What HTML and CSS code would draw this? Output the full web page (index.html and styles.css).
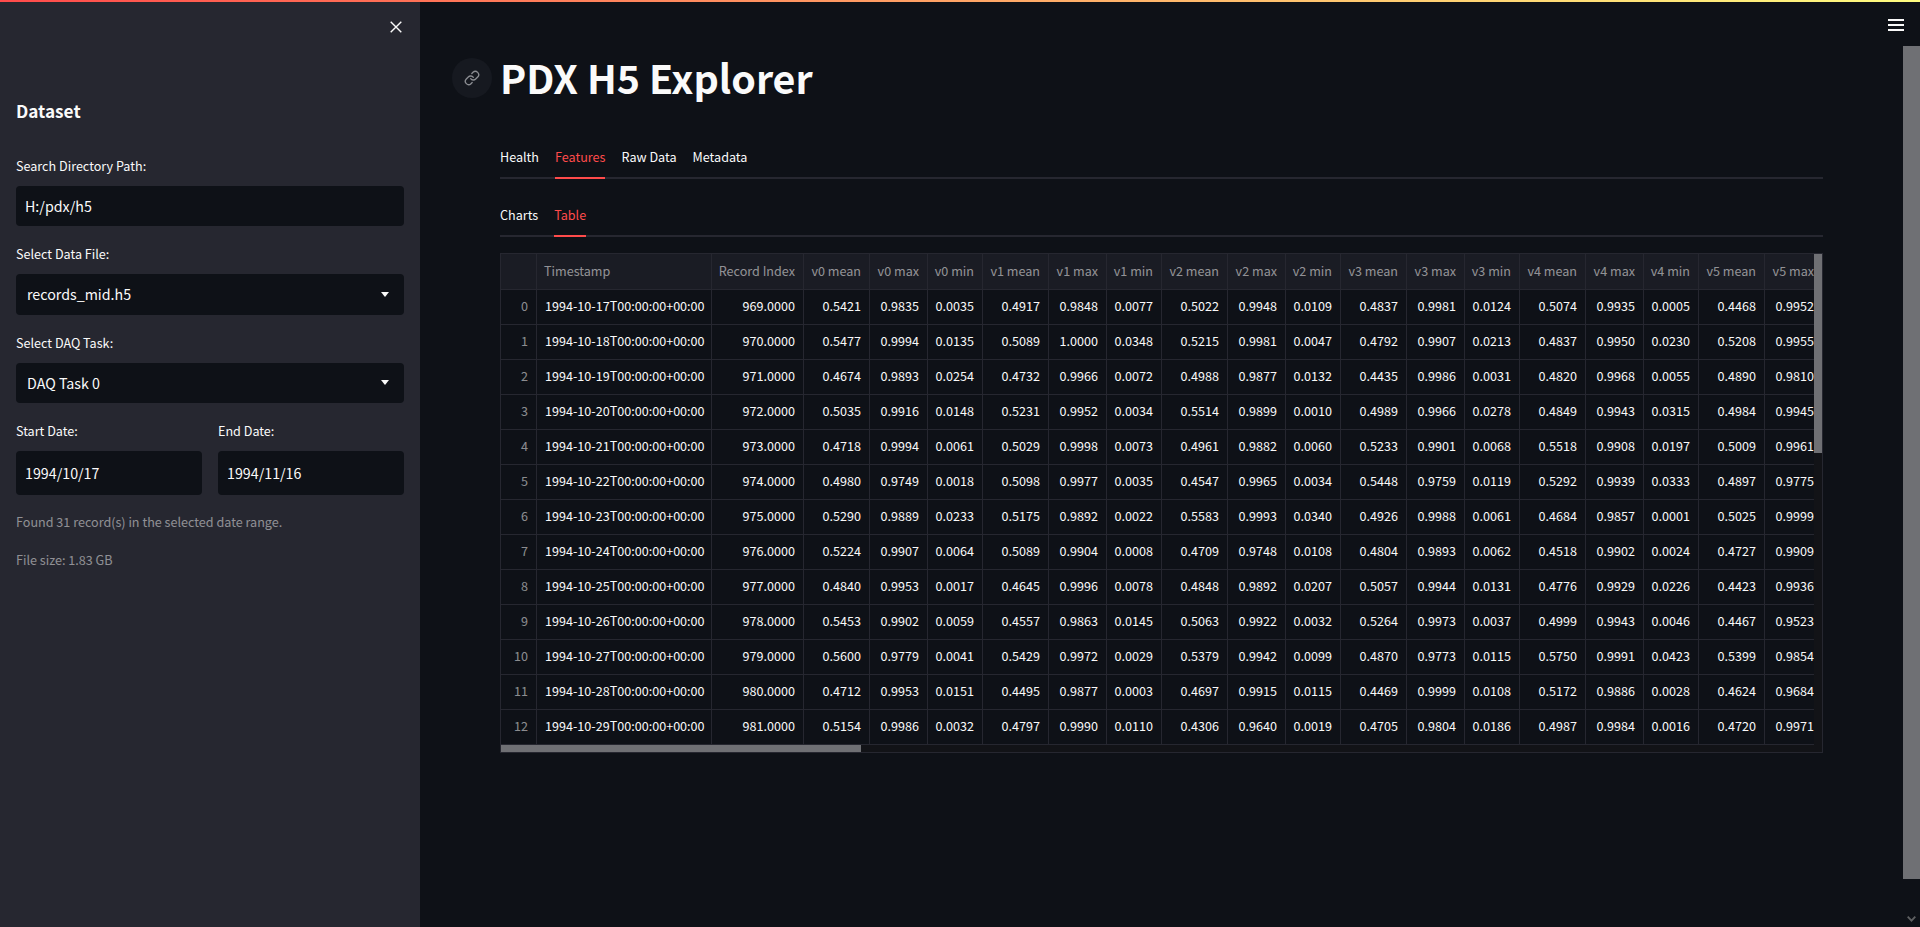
FILE: index.html
```html
<!DOCTYPE html>
<html lang="en">
<head>
    <meta charset="UTF-8">
    <meta name="viewport" content="width=device-width, initial-scale=1.0">
    <title>PDX H5 Explorer</title>
    <link rel="stylesheet" href="styles.css">
</head>
<body>
    <div class="top-bar"></div>

    <!-- Sidebar -->
    <aside class="sidebar">
        <div class="sidebar-top">
            <svg class="close-icon" viewBox="0 0 12 12" width="12" height="12"><path d="M0.7 0.7L11.3 11.3M11.3 0.7L0.7 11.3"/></svg>
        </div>
        <h2 class="sidebar-title">Dataset</h2>
        <div class="field">
            <label>Search Directory Path:</label>
            <div class="input">H:/pdx/h5</div>
        </div>
        <div class="field">
            <label>Select Data File:</label>
            <div class="select">records_mid.h5<span class="arrow"></span></div>
        </div>
        <div class="field">
            <label>Select DAQ Task:</label>
            <div class="select">DAQ Task 0<span class="arrow"></span></div>
        </div>
        <div class="date-row">
            <div>
                <label>Start Date:</label>
                <div class="input date">1994/10/17</div>
            </div>
            <div>
                <label>End Date:</label>
                <div class="input date">1994/11/16</div>
            </div>
        </div>
        <p class="note first">Found 31 record(s) in the selected date range.</p>
        <p class="note">File size: 1.83 GB</p>
    </aside>

    <!-- Main area -->
    <main class="main">
        <svg class="menu-icon" viewBox="0 0 16 12" width="16" height="12"><rect y="0" width="16" height="2"/><rect y="5" width="16" height="2"/><rect y="10" width="16" height="2"/></svg>

        <h1 class="page-title">
            <span class="anchor">
                <svg viewBox="0 0 24 24" width="16" height="16"><path d="M10 13a5 5 0 0 0 7.54.54l3-3a5 5 0 0 0-7.07-7.07l-1.72 1.71"/><path d="M14 11a5 5 0 0 0-7.54-.54l-3 3a5 5 0 0 0 7.07 7.07l1.71-1.71"/></svg>
            </span>
            PDX H5 Explorer
        </h1>

        <div class="tabs">
            <span class="tab">Health</span>
            <span class="tab active">Features</span>
            <span class="tab">Raw Data</span>
            <span class="tab">Metadata</span>
        </div>
        <div class="tabs sub-tabs">
            <span class="tab">Charts</span>
            <span class="tab active">Table</span>
        </div>

        <div class="table-box">
            <table class="data-table">
                <colgroup>
                    <col class="c-index"><col class="c-time"><col class="c-rec">
                    <col class="c-mean"><col class="c-max"><col class="c-min">
                    <col class="c-mean"><col class="c-max"><col class="c-min">
                    <col class="c-mean"><col class="c-max"><col class="c-min">
                    <col class="c-mean"><col class="c-max"><col class="c-min">
                    <col class="c-mean"><col class="c-max"><col class="c-min">
                    <col class="c-mean"><col class="c-max">
                </colgroup>
                <thead>
                    <tr><th></th><th class="left">Timestamp</th><th>Record Index</th><th>v0 mean</th><th>v0 max</th><th>v0 min</th><th>v1 mean</th><th>v1 max</th><th>v1 min</th><th>v2 mean</th><th>v2 max</th><th>v2 min</th><th>v3 mean</th><th>v3 max</th><th>v3 min</th><th>v4 mean</th><th>v4 max</th><th>v4 min</th><th>v5 mean</th><th>v5 max</th></tr>
                </thead>
                <tbody>
                    <tr><th>0</th><td class="left">1994-10-17T00:00:00+00:00</td><td>969.0000</td><td>0.5421</td><td>0.9835</td><td>0.0035</td><td>0.4917</td><td>0.9848</td><td>0.0077</td><td>0.5022</td><td>0.9948</td><td>0.0109</td><td>0.4837</td><td>0.9981</td><td>0.0124</td><td>0.5074</td><td>0.9935</td><td>0.0005</td><td>0.4468</td><td>0.9952</td></tr>
                    <tr><th>1</th><td class="left">1994-10-18T00:00:00+00:00</td><td>970.0000</td><td>0.5477</td><td>0.9994</td><td>0.0135</td><td>0.5089</td><td>1.0000</td><td>0.0348</td><td>0.5215</td><td>0.9981</td><td>0.0047</td><td>0.4792</td><td>0.9907</td><td>0.0213</td><td>0.4837</td><td>0.9950</td><td>0.0230</td><td>0.5208</td><td>0.9955</td></tr>
                    <tr><th>2</th><td class="left">1994-10-19T00:00:00+00:00</td><td>971.0000</td><td>0.4674</td><td>0.9893</td><td>0.0254</td><td>0.4732</td><td>0.9966</td><td>0.0072</td><td>0.4988</td><td>0.9877</td><td>0.0132</td><td>0.4435</td><td>0.9986</td><td>0.0031</td><td>0.4820</td><td>0.9968</td><td>0.0055</td><td>0.4890</td><td>0.9810</td></tr>
                    <tr><th>3</th><td class="left">1994-10-20T00:00:00+00:00</td><td>972.0000</td><td>0.5035</td><td>0.9916</td><td>0.0148</td><td>0.5231</td><td>0.9952</td><td>0.0034</td><td>0.5514</td><td>0.9899</td><td>0.0010</td><td>0.4989</td><td>0.9966</td><td>0.0278</td><td>0.4849</td><td>0.9943</td><td>0.0315</td><td>0.4984</td><td>0.9945</td></tr>
                    <tr><th>4</th><td class="left">1994-10-21T00:00:00+00:00</td><td>973.0000</td><td>0.4718</td><td>0.9994</td><td>0.0061</td><td>0.5029</td><td>0.9998</td><td>0.0073</td><td>0.4961</td><td>0.9882</td><td>0.0060</td><td>0.5233</td><td>0.9901</td><td>0.0068</td><td>0.5518</td><td>0.9908</td><td>0.0197</td><td>0.5009</td><td>0.9961</td></tr>
                    <tr><th>5</th><td class="left">1994-10-22T00:00:00+00:00</td><td>974.0000</td><td>0.4980</td><td>0.9749</td><td>0.0018</td><td>0.5098</td><td>0.9977</td><td>0.0035</td><td>0.4547</td><td>0.9965</td><td>0.0034</td><td>0.5448</td><td>0.9759</td><td>0.0119</td><td>0.5292</td><td>0.9939</td><td>0.0333</td><td>0.4897</td><td>0.9775</td></tr>
                    <tr><th>6</th><td class="left">1994-10-23T00:00:00+00:00</td><td>975.0000</td><td>0.5290</td><td>0.9889</td><td>0.0233</td><td>0.5175</td><td>0.9892</td><td>0.0022</td><td>0.5583</td><td>0.9993</td><td>0.0340</td><td>0.4926</td><td>0.9988</td><td>0.0061</td><td>0.4684</td><td>0.9857</td><td>0.0001</td><td>0.5025</td><td>0.9999</td></tr>
                    <tr><th>7</th><td class="left">1994-10-24T00:00:00+00:00</td><td>976.0000</td><td>0.5224</td><td>0.9907</td><td>0.0064</td><td>0.5089</td><td>0.9904</td><td>0.0008</td><td>0.4709</td><td>0.9748</td><td>0.0108</td><td>0.4804</td><td>0.9893</td><td>0.0062</td><td>0.4518</td><td>0.9902</td><td>0.0024</td><td>0.4727</td><td>0.9909</td></tr>
                    <tr><th>8</th><td class="left">1994-10-25T00:00:00+00:00</td><td>977.0000</td><td>0.4840</td><td>0.9953</td><td>0.0017</td><td>0.4645</td><td>0.9996</td><td>0.0078</td><td>0.4848</td><td>0.9892</td><td>0.0207</td><td>0.5057</td><td>0.9944</td><td>0.0131</td><td>0.4776</td><td>0.9929</td><td>0.0226</td><td>0.4423</td><td>0.9936</td></tr>
                    <tr><th>9</th><td class="left">1994-10-26T00:00:00+00:00</td><td>978.0000</td><td>0.5453</td><td>0.9902</td><td>0.0059</td><td>0.4557</td><td>0.9863</td><td>0.0145</td><td>0.5063</td><td>0.9922</td><td>0.0032</td><td>0.5264</td><td>0.9973</td><td>0.0037</td><td>0.4999</td><td>0.9943</td><td>0.0046</td><td>0.4467</td><td>0.9523</td></tr>
                    <tr><th>10</th><td class="left">1994-10-27T00:00:00+00:00</td><td>979.0000</td><td>0.5600</td><td>0.9779</td><td>0.0041</td><td>0.5429</td><td>0.9972</td><td>0.0029</td><td>0.5379</td><td>0.9942</td><td>0.0099</td><td>0.4870</td><td>0.9773</td><td>0.0115</td><td>0.5750</td><td>0.9991</td><td>0.0423</td><td>0.5399</td><td>0.9854</td></tr>
                    <tr><th>11</th><td class="left">1994-10-28T00:00:00+00:00</td><td>980.0000</td><td>0.4712</td><td>0.9953</td><td>0.0151</td><td>0.4495</td><td>0.9877</td><td>0.0003</td><td>0.4697</td><td>0.9915</td><td>0.0115</td><td>0.4469</td><td>0.9999</td><td>0.0108</td><td>0.5172</td><td>0.9886</td><td>0.0028</td><td>0.4624</td><td>0.9684</td></tr>
                    <tr><th>12</th><td class="left">1994-10-29T00:00:00+00:00</td><td>981.0000</td><td>0.5154</td><td>0.9986</td><td>0.0032</td><td>0.4797</td><td>0.9990</td><td>0.0110</td><td>0.4306</td><td>0.9640</td><td>0.0019</td><td>0.4705</td><td>0.9804</td><td>0.0186</td><td>0.4987</td><td>0.9984</td><td>0.0016</td><td>0.4720</td><td>0.9971</td></tr>
                </tbody>
            </table>
            <div class="scroll-v"><div class="thumb-v"></div></div>
            <div class="scroll-h"><div class="thumb-h"></div></div>
        </div>
    </main>

    <!-- Page scrollbar -->
    <div class="page-scroll">
        <div class="page-thumb"></div>
        <svg class="page-chevron" viewBox="0 0 9 6" width="9" height="6"><path d="M0.7 0.7L4.5 4.7L8.3 0.7"/></svg>
    </div>
</body>
</html>
```

FILE: styles.css
```css
* {
    box-sizing: border-box;
}
body {
    font-family: 'Noto Sans CJK SC', 'Noto Sans', sans-serif;
    background-color: #0e1117;
    color: #fafafa;
    margin: 0;
    height: 927px;
    overflow: hidden;
    display: flex;
}
.top-bar {
    position: absolute;
    top: 0;
    left: 0;
    right: 0;
    height: 2px;
    background: linear-gradient(90deg, #ff4b4b, #fffd80);
}

/* sidebar */
.sidebar {
    width: 420px;
    flex: none;
    background-color: #262730;
    padding: 21px 16px 0;
}
.sidebar-top {
    display: flex;
    justify-content: flex-end;
    padding-right: 2px;
    height: 12px;
}
.close-icon {
    margin-left: auto;
    stroke: #fafafa;
    stroke-width: 1.4;
    fill: none;
}
.sidebar-title {
    font-size: 17.2px;
    font-weight: 700;
    line-height: 28px;
    margin: 64px 0 31px;
}
.sidebar label {
    display: block;
    font-size: 12.6px;
    line-height: 20px;
    margin-bottom: 10px;
}
.field {
    margin-bottom: 18px;
}
.input, .select {
    background-color: #0e1117;
    border-radius: 4px;
    font-size: 14.25px;
    height: 40px;
    line-height: 40px;
    padding-left: 9px;
}
.select {
    height: 40.5px;
    padding: 0 15px 0 11px;
    display: flex;
    justify-content: space-between;
    align-items: center;
}
.arrow {
    width: 0;
    height: 0;
    border-left: 4.5px solid transparent;
    border-right: 4.5px solid transparent;
    border-top: 5px solid #fafafa;
}
.date-row {
    display: grid;
    grid-template-columns: 1fr 1fr;
    gap: 16px;
}
.date {
    height: 44px;
    line-height: 44px;
}
.note {
    font-size: 12.6px;
    line-height: 20px;
    color: rgba(250, 250, 250, 0.5);
    margin: 18px 0 0;
}
.note.first {
    margin-top: 17px;
}

/* main */
.main {
    position: relative;
    flex: 1;
    min-width: 0;
    padding: 50px 80px 0;
}
.menu-icon {
    position: absolute;
    top: 19px;
    right: -1px;
    fill: #fafafa;
}
.page-title {
    position: relative;
    font-size: 39.4px;
    font-weight: 700;
    line-height: 54px;
    margin: 0 0 35px;
}
.anchor {
    position: absolute;
    left: -48px;
    top: 8px;
    width: 40px;
    height: 40px;
    border-radius: 50%;
    background-color: #161920;
    display: flex;
    align-items: center;
    justify-content: center;
}
.anchor svg {
    fill: none;
    stroke: #8b8d92;
    stroke-width: 2;
    stroke-linecap: round;
    stroke-linejoin: round;
}
.tabs {
    display: flex;
    gap: 16px;
    height: 40px;
    border-bottom: 2px solid #262730;
    margin-bottom: 18px;
    font-size: 12.6px;
}
.sub-tabs {
    margin-bottom: 16px;
}
.tab {
    height: 40px;
    line-height: 36px;
}
.tab.active {
    color: #ff4b4b;
    border-bottom: 2px solid #ff4b4b;
}

/* table */
.table-box {
    position: relative;
    width: 1323px;
    height: 500px;
    border: 1px solid #262730;
    overflow: hidden;
}
.data-table {
    table-layout: fixed;
    width: 1322px;
    border-collapse: separate;
    border-spacing: 0;
    font-size: 12.6px;
    line-height: 20px;
}
.c-index { width: 36px; }
.c-time { width: 175px; }
.c-rec { width: 92px; }
.c-mean { width: 66px; }
.c-max { width: 58px; }
.c-min { width: 55px; }
.data-table th, .data-table td {
    height: 35px;
    padding: 0 8px 2px 0;
    text-align: right;
    font-weight: 400;
    white-space: nowrap;
    overflow: hidden;
    border-right: 1px solid #262730;
    border-bottom: 1px solid #262730;
}
.data-table thead th {
    height: 36px;
    background-color: #1a1c24;
    color: rgba(250, 250, 250, 0.55);
}
.data-table tbody th {
    color: rgba(250, 250, 250, 0.55);
}
.data-table th.left {
    text-align: left;
    padding: 0 0 2px 7px;
}
.data-table td.left {
    text-align: left;
    padding: 0 0 2px 8px;
}
.scroll-v {
    position: absolute;
    top: 0;
    right: 0;
    bottom: 0;
    width: 8px;
    background-color: #121317;
}
.thumb-v {
    height: 199px;
    background-color: #6f7074;
}
.scroll-h {
    position: absolute;
    left: 0;
    right: 0;
    bottom: 0;
    height: 7px;
    background-color: #121317;
}
.thumb-h {
    width: 360px;
    height: 7px;
    background-color: #6f7074;
}

/* page scrollbar */
.page-scroll {
    width: 17px;
    flex: none;
    padding-top: 46px;
    display: flex;
    flex-direction: column;
    align-items: center;
}
.page-thumb {
    width: 17px;
    height: 833px;
    background-color: #6f7074;
}
.page-chevron {
    margin-top: 37px;
    fill: none;
    stroke: #5f6062;
    stroke-width: 1.8;
}
```
